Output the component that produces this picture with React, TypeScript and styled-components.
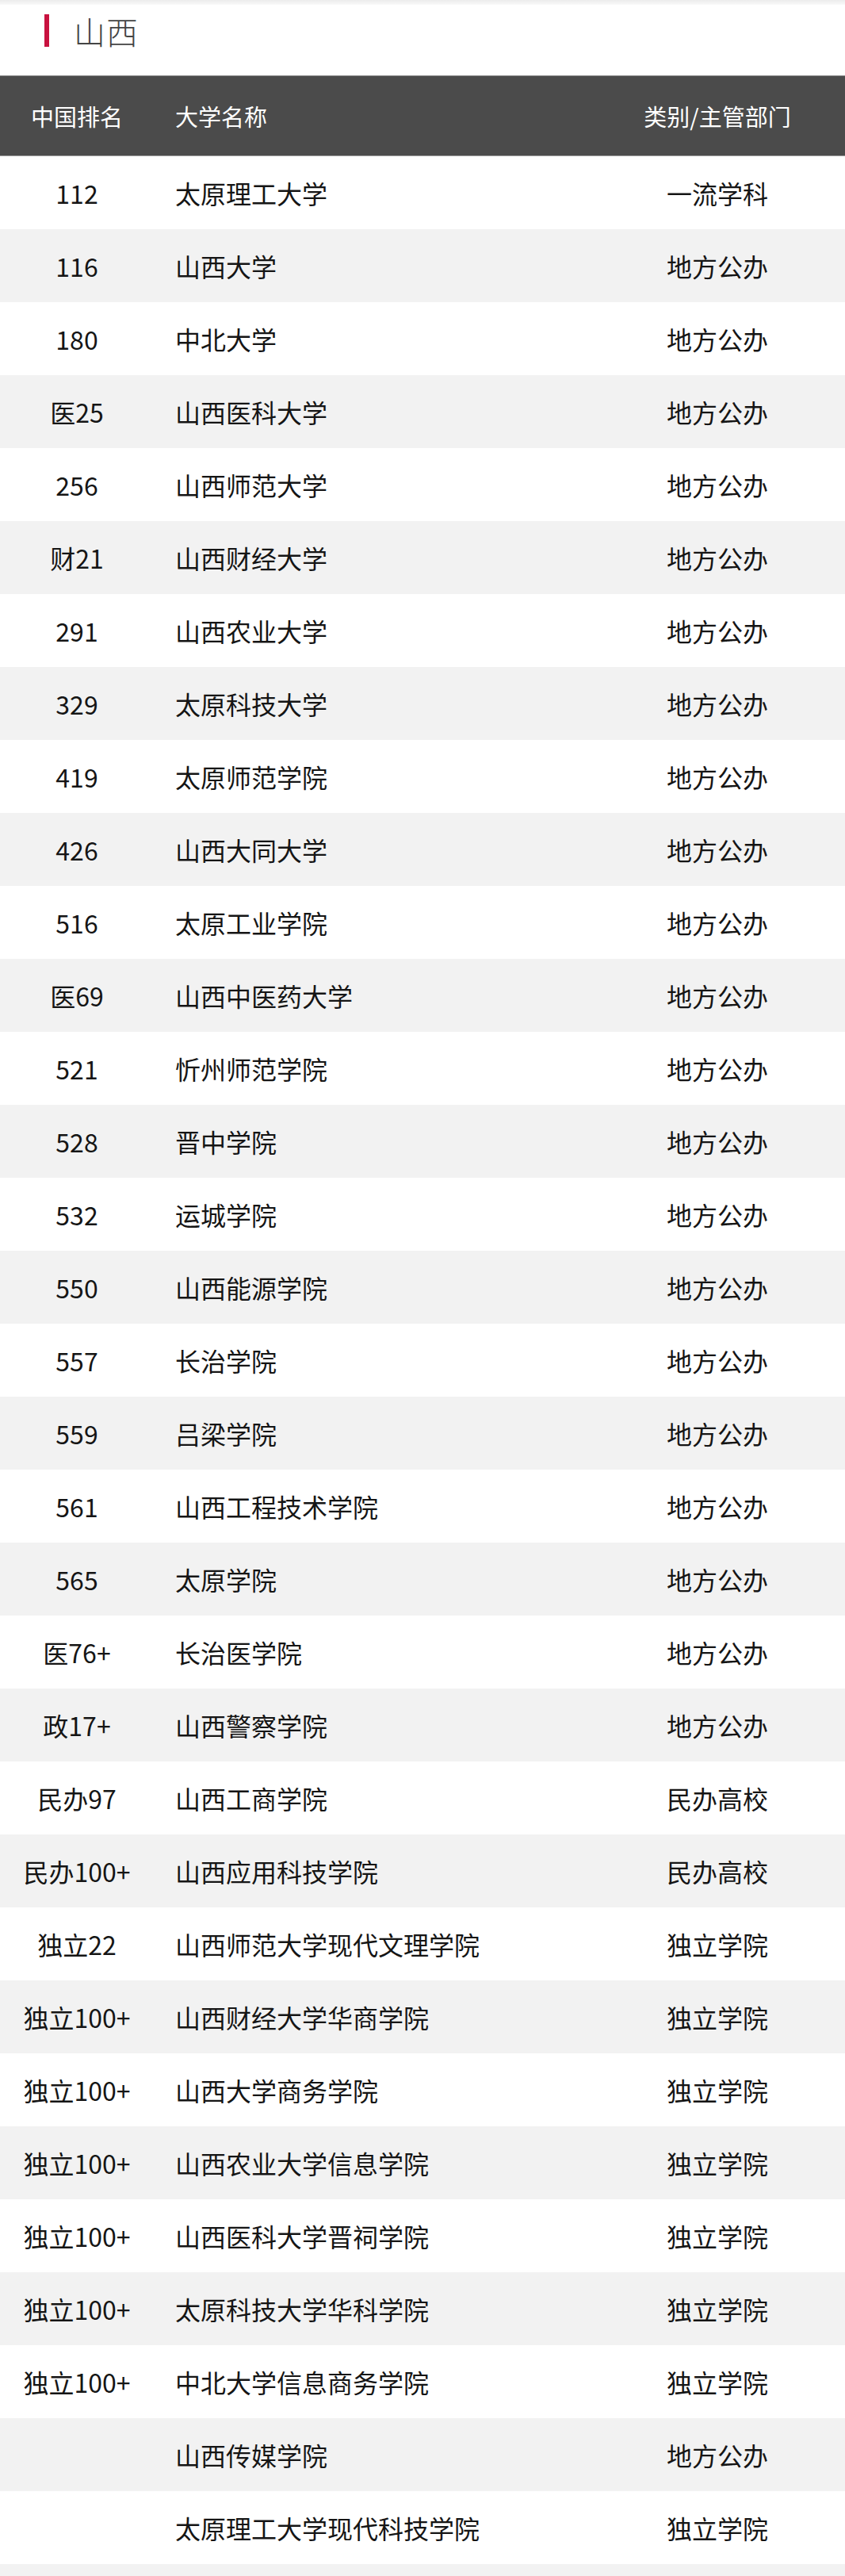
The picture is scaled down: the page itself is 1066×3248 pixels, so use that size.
import styled, { createGlobalStyle } from "styled-components";

type Uni = { rank: string; name: string; kind: string };

const unis: Uni[] = [
  { rank: "112", name: "太原理工大学", kind: "一流学科" },
  { rank: "116", name: "山西大学", kind: "地方公办" },
  { rank: "180", name: "中北大学", kind: "地方公办" },
  { rank: "医25", name: "山西医科大学", kind: "地方公办" },
  { rank: "256", name: "山西师范大学", kind: "地方公办" },
  { rank: "财21", name: "山西财经大学", kind: "地方公办" },
  { rank: "291", name: "山西农业大学", kind: "地方公办" },
  { rank: "329", name: "太原科技大学", kind: "地方公办" },
  { rank: "419", name: "太原师范学院", kind: "地方公办" },
  { rank: "426", name: "山西大同大学", kind: "地方公办" },
  { rank: "516", name: "太原工业学院", kind: "地方公办" },
  { rank: "医69", name: "山西中医药大学", kind: "地方公办" },
  { rank: "521", name: "忻州师范学院", kind: "地方公办" },
  { rank: "528", name: "晋中学院", kind: "地方公办" },
  { rank: "532", name: "运城学院", kind: "地方公办" },
  { rank: "550", name: "山西能源学院", kind: "地方公办" },
  { rank: "557", name: "长治学院", kind: "地方公办" },
  { rank: "559", name: "吕梁学院", kind: "地方公办" },
  { rank: "561", name: "山西工程技术学院", kind: "地方公办" },
  { rank: "565", name: "太原学院", kind: "地方公办" },
  { rank: "医76+", name: "长治医学院", kind: "地方公办" },
  { rank: "政17+", name: "山西警察学院", kind: "地方公办" },
  { rank: "民办97", name: "山西工商学院", kind: "民办高校" },
  { rank: "民办100+", name: "山西应用科技学院", kind: "民办高校" },
  { rank: "独立22", name: "山西师范大学现代文理学院", kind: "独立学院" },
  { rank: "独立100+", name: "山西财经大学华商学院", kind: "独立学院" },
  { rank: "独立100+", name: "山西大学商务学院", kind: "独立学院" },
  { rank: "独立100+", name: "山西农业大学信息学院", kind: "独立学院" },
  { rank: "独立100+", name: "山西医科大学晋祠学院", kind: "独立学院" },
  { rank: "独立100+", name: "太原科技大学华科学院", kind: "独立学院" },
  { rank: "独立100+", name: "中北大学信息商务学院", kind: "独立学院" },
  { rank: "", name: "山西传媒学院", kind: "地方公办" },
  { rank: "", name: "太原理工大学现代科技学院", kind: "独立学院" },
];

const GlobalStyle = createGlobalStyle`
  body {
    margin: 0;
    background: #f2f2f2;
    font-family: "Noto Sans CJK SC", "Noto Sans", sans-serif;
  }
`;

export default function App() {
  return (
    <>
      <GlobalStyle />
      <Page>
        <TopShade />
        <TitleBar>
          <Accent />
          <Title>山西</Title>
        </TitleBar>
        <Table>
          <HeadRow>
            <RankCell>中国排名</RankCell>
            <NameCell>大学名称</NameCell>
            <KindCell>类别/主管部门</KindCell>
          </HeadRow>
          {unis.map((u, i) => (
            <Row key={u.name} $striped={i % 2 === 1}>
              <RankCell>{u.rank}</RankCell>
              <NameCell>{u.name}</NameCell>
              <KindCell>{u.kind}</KindCell>
            </Row>
          ))}
        </Table>
      </Page>
    </>
  );
}

const Page = styled.div`
  width: 1066px;
  background: #fff;
`;

const TopShade = styled.div`
  height: 6px;
  background: linear-gradient(#ececec, #f9f9f9);
`;

const TitleBar = styled.div`
  height: 89px;
  display: flex;
  align-items: center;
  padding: 0 0 24px 56px;
  box-sizing: border-box;
`;

const Accent = styled.span`
  width: 6px;
  height: 41px;
  background: #c8123f;
`;

const Title = styled.h1`
  margin: 0 0 0 31px;
  font-size: 40px;
  font-weight: 300;
  line-height: 1;
  color: #444;
  letter-spacing: 1px;
`;

const Table = styled.div`
  display: flex;
  flex-direction: column;
  padding-bottom: 14px;
  background: #f2f2f2;
`;

const grid = `
  display: grid;
  grid-template-columns: 194px 1fr 322px;
  align-items: center;
`;

const HeadRow = styled.div`
  ${grid}
  height: 102px;
  box-sizing: border-box;
  background: #4b4b4b;
  border-top: 1px solid #8f8f8f;
  border-bottom: 1px solid #9a9a9a;
  color: #fff;
  font-size: 29px;
`;

const Row = styled.div<{ $striped: boolean }>`
  ${grid}
  height: 92px;
  background: ${(p) => (p.$striped ? "#f2f2f2" : "#fff")};
  color: #151515;
  font-size: 32px;
`;

const RankCell = styled.div`
  text-align: center;
  white-space: nowrap;
`;

const NameCell = styled.div`
  padding-left: 27px;
  white-space: nowrap;
`;

const KindCell = styled.div`
  text-align: center;
  white-space: nowrap;
`;
